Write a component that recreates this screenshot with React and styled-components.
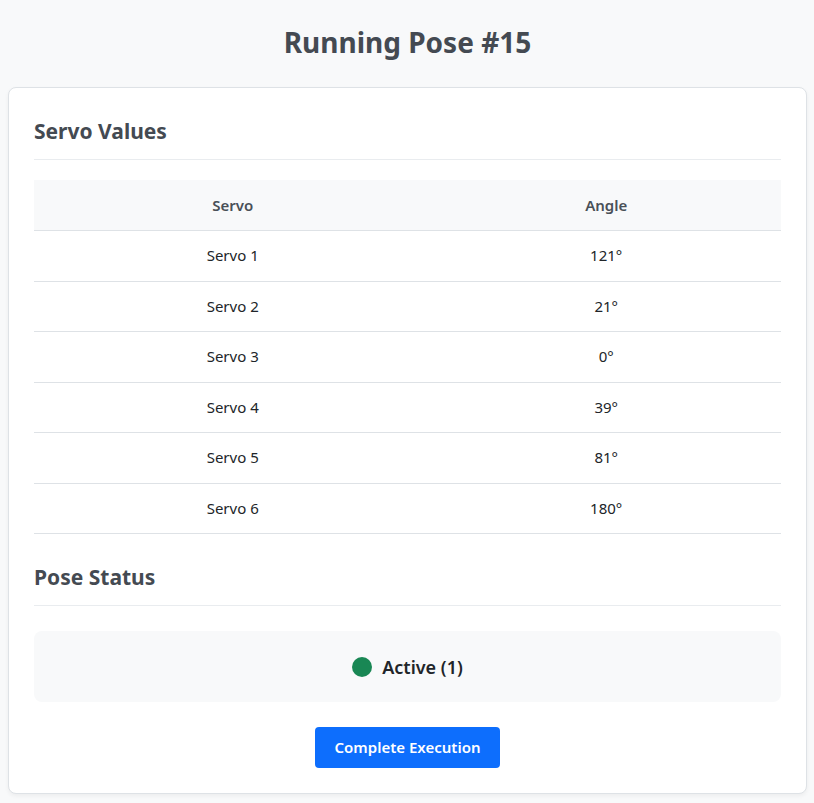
import React from "react";
import styled, { createGlobalStyle } from "styled-components";

const servos = [
  { name: "Servo 1", angle: 121 },
  { name: "Servo 2", angle: 21 },
  { name: "Servo 3", angle: 0 },
  { name: "Servo 4", angle: 39 },
  { name: "Servo 5", angle: 81 },
  { name: "Servo 6", angle: 180 },
];

const App = () => {
  return (
    <Page>
      <GlobalStyle />
      <Title>Running Pose #15</Title>
      <Card>
        <SectionTitle>Servo Values</SectionTitle>
        <Table>
          <thead>
            <tr>
              <Th width="53.2%">Servo</Th>
              <Th>Angle</Th>
            </tr>
          </thead>
          <tbody>
            {servos.map((s) => (
              <tr key={s.name}>
                <Td>{s.name}</Td>
                <Td>{s.angle}°</Td>
              </tr>
            ))}
          </tbody>
        </Table>
        <SectionTitle>Pose Status</SectionTitle>
        <StatusBox>
          <Dot />
          <StatusText>Active (1)</StatusText>
        </StatusBox>
        <BtnRow>
          <Btn>Complete Execution</Btn>
        </BtnRow>
      </Card>
    </Page>
  );
};

const GlobalStyle = createGlobalStyle`
  body {
    margin: 0;
    background-color: #f8f9fa;
    font-family: "Noto Sans", "Open Sans", sans-serif;
    color: #212529;
  }
`;

const Page = styled.div`
  padding: 0 7px 10px 8px;
`;

const Title = styled.h1`
  margin: 0;
  padding: 22px 0 25px;
  text-align: center;
  font-size: 28px;
  line-height: 40px;
  font-weight: 700;
  color: #444a52;
`;

const Card = styled.div`
  background-color: #fff;
  border: 1px solid #dee2e6;
  border-radius: 8px;
  box-shadow: 0 2px 4px rgba(0, 0, 0, 0.05);
  padding: 25px;
`;

const SectionTitle = styled.h3`
  margin: 0 0 20px;
  padding-bottom: 10px;
  font-size: 21px;
  line-height: 36px;
  font-weight: 700;
  color: #444a52;
  border-bottom: 1px solid #e9ecef;
`;

const Table = styled.table`
  width: 100%;
  border-collapse: collapse;
  margin-bottom: 25px;
`;

const Th = styled.th`
  width: ${(p) => p.width || "auto"};
  background-color: #f8f9fa;
  padding: 15px;
  font-size: 15px;
  line-height: 20px;
  font-weight: 600;
  color: #495057;
  text-align: center;
  border-bottom: 1px solid #dee2e6;
`;

const Td = styled.td`
  padding: 15px;
  font-size: 15px;
  line-height: 19.5px;
  text-align: center;
  color: #212529;
  border-bottom: 1px solid #dee2e6;
`;

const StatusBox = styled.div`
  display: flex;
  align-items: center;
  justify-content: center;
  gap: 10px;
  margin-top: 25px;
  height: 71px;
  background-color: #f8f9fa;
  border-radius: 8px;
`;

const Dot = styled.span`
  width: 20px;
  height: 20px;
  border-radius: 50%;
  background-color: #198754;
`;

const StatusText = styled.span`
  font-size: 18px;
  font-weight: 600;
  color: #212529;
`;

const BtnRow = styled.div`
  display: flex;
  justify-content: center;
  margin-top: 25px;
`;

const Btn = styled.button`
  font-family: inherit;
  font-size: 15px;
  font-weight: 600;
  line-height: 21px;
  white-space: nowrap;
  color: #fff;
  background-color: #0d6efd;
  border: none;
  border-radius: 4px;
  padding: 10px 20px;
  cursor: pointer;
`;

export default App;
